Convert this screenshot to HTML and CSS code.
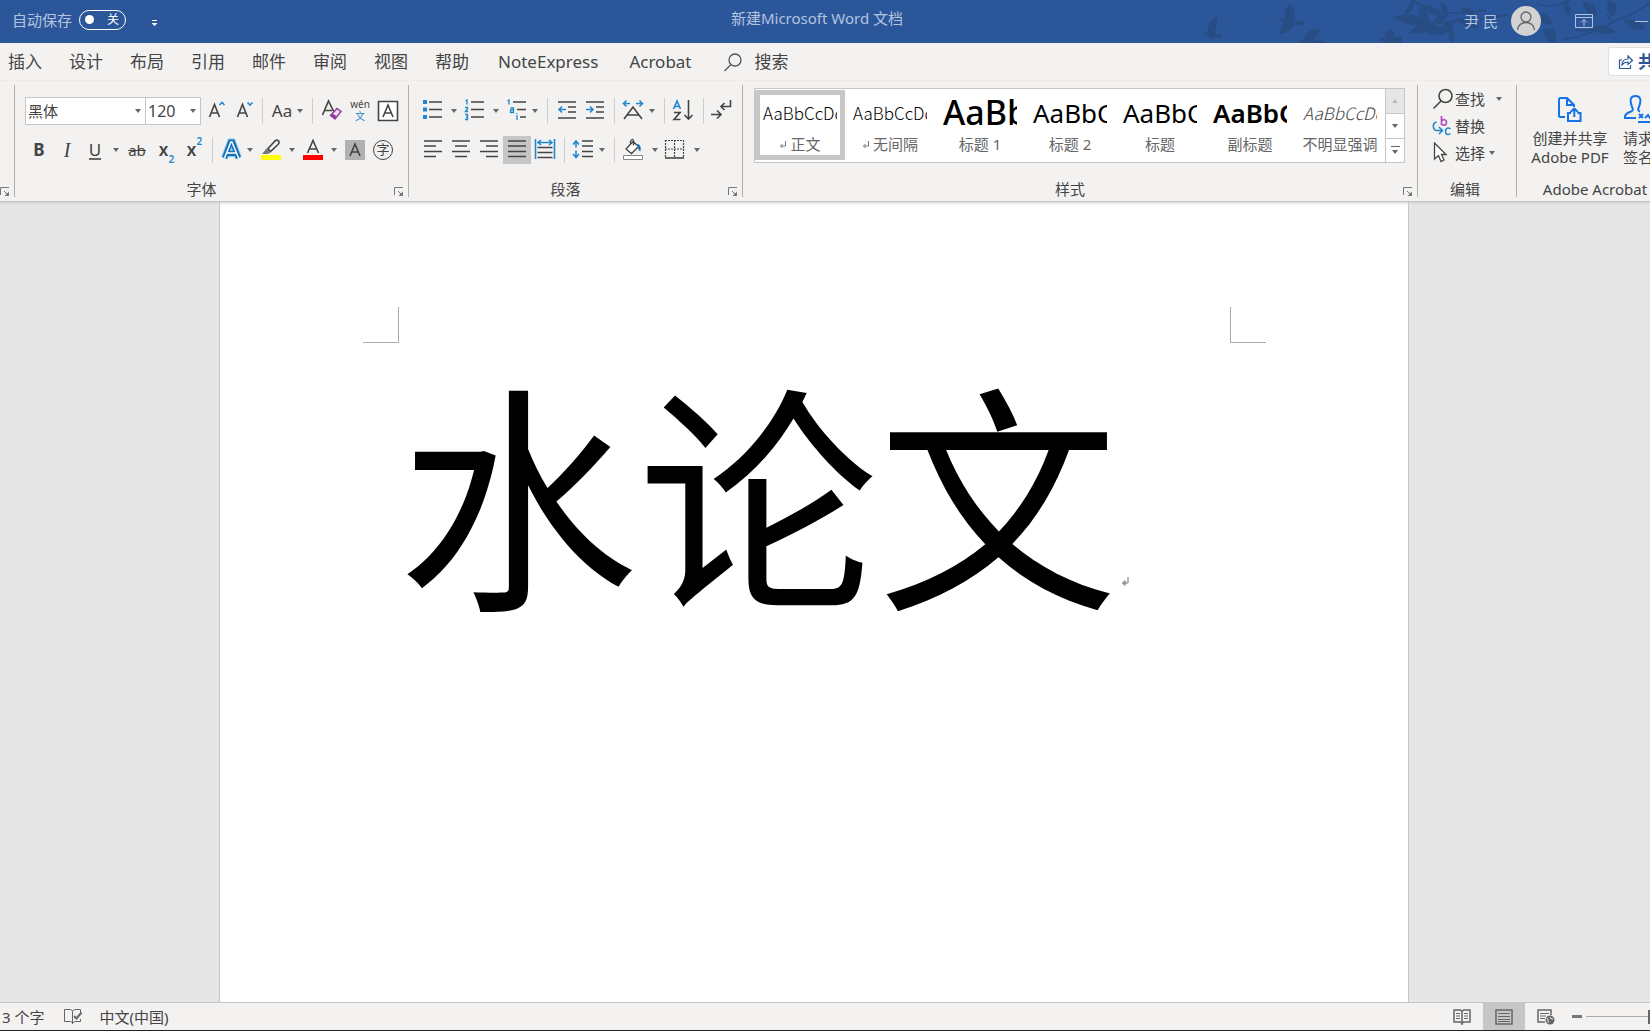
FILE: index.html
```html
<!DOCTYPE html>
<html lang="zh-CN">
<head>
<meta charset="utf-8">
<title>新建Microsoft Word 文档</title>
<link rel="stylesheet" href="styles.css">
</head>
<body>
<header class="titlebar">
  <svg class="titlebar-art" viewBox="0 0 1350 129" aria-hidden="true">
    <g transform="translate(-120 0)" fill="#284d84">
      <path d="M125 95L141 97Q146 56 172 50Q169 80 165 102L187 106L185 115L167 110L157 118L145 112L136 103Z"/>
      <path d="M357 53L373 57Q374 20 390 10Q406 22 405 62L434 64L432 77L403 74Q388 100 360 102Q361 80 370 68Z"/>
      <path d="M413 122L433 117Q438 90 465 86L480 88Q475 108 460 121L491 123V129H425Z"/>
      <path d="M655 115L674 114Q673 93 688 88Q704 93 702 110L726 112L724 129H676Z"/>
      <path d="M700 50Q760 30 808 70Q750 90 700 50ZM733 45Q738 8 763 3Q762 35 733 45ZM770 12Q828 10 848 48Q800 44 770 12ZM775 25Q808 32 806 68Q772 55 775 25ZM842 2Q872 24 862 50Q838 32 842 2ZM745 98Q780 62 828 76Q790 112 745 98ZM795 94Q838 66 878 88Q840 118 795 94ZM818 68Q834 40 862 42Q852 72 818 68ZM870 86Q895 100 876 128Q858 106 870 86ZM845 70Q870 62 884 80Q862 88 845 70ZM890 60Q930 50 960 82Q920 92 890 60ZM900 20Q935 20 950 45Q915 46 900 20Z"/>
      <path d="M1120 40Q1168 32 1180 72Q1132 80 1120 40ZM1150 90Q1192 70 1188 128Q1152 128 1150 90ZM1215 10Q1205 30 1225 48Q1245 26 1215 0ZM1268 5Q1318 10 1310 52Q1272 40 1268 5ZM1290 85Q1330 62 1368 95Q1326 112 1290 85ZM1345 0Q1385 14 1358 50Q1332 30 1345 0ZM1390 60Q1436 50 1458 88Q1410 98 1390 60Z"/>
      <path d="M755 0Q790 24 850 38Q900 42 980 30M800 72Q860 70 910 58Q980 60 1050 42M862 80L895 58M1130 10Q1180 30 1230 0M1210 118Q1300 104 1370 60Q1410 48 1470 10M1250 90Q1310 96 1340 80M1355 65L1340 42" fill="none" stroke="#284d84" stroke-width="6"/>
    </g>
  </svg>
  <div class="quick-access">
    <span class="autosave-label" id="autosave">自动保存</span>
    <button class="toggle" role="switch" aria-checked="false" aria-labelledby="autosave"><span class="toggle-knob"></span>关</button>
    <button class="qat-more" aria-label="自定义快速访问工具栏"><svg width="9" height="8" viewBox="0 0 9 8"><path d="M2 1.5H7" stroke="#fff"/><path d="M1.500 4H7.500L4.500 7Z" fill="#fff"/></svg></button>
  </div>
  <h1 class="doc-title">新建Microsoft Word 文档</h1>
  <div class="account">
    <span class="user-name">尹 民</span>
    <button class="avatar" aria-label="帐户"><svg width="30" height="30" viewBox="0 0 30 30"><circle cx="15" cy="15" r="15" fill="#d2d2d2"/><g fill="none" stroke="#666" stroke-width="1.300"><circle cx="15" cy="11" r="5"/><path d="M6.500 24C7 14 23 14 23.500 24"/></g></svg></button>
    <button class="win-button" aria-label="功能区显示选项"><svg width="18" height="14" viewBox="0 0 18 14" fill="none" stroke="#b4c4df"><path d="M.5.500H17.500V13.500H.5ZM.5 3.500H17.500M9 12V6M6 8.500L9 5.500L12 8.500"/></svg></button>
    <button class="win-button minimize" aria-label="最小化"><svg width="15" height="14" viewBox="0 0 15 14"><path d="M0 7.500H13" stroke="#b4c4df"/></svg></button>
  </div>
</header>

<nav class="tabs">
  <a href="#insert">插入</a><a href="#design">设计</a><a href="#layout">布局</a><a href="#refs">引用</a><a href="#mail">邮件</a><a href="#review">审阅</a><a href="#view">视图</a><a href="#help">帮助</a><a href="#noteexpress" class="wide">NoteExpress</a><a href="#acrobat" class="wide">Acrobat</a>
  <a href="#search" class="search"><svg width="20" height="20" viewBox="0 0 20 20" fill="none" stroke="#555" stroke-width="1.300"><circle cx="12" cy="8" r="6"/><path d="M8 12.500L1.500 19"/></svg>搜索</a>
  <button class="share"><svg width="16" height="16" viewBox="0 0 16 16" fill="none" stroke="#2b579a" stroke-width="1.200"><path d="M4 6H1.500V14.500H12.500V11M4 11C4 7 6.500 5 10 5V2L14.500 6.500L10 10.500V8C7 8 5.500 9 4 11Z"/></svg><span>共享</span></button>
</nav>

<main class="ribbon">
  <section class="group group-clipboard"><div class="group-foot"><button class="launcher" aria-label="剪贴板设置"><svg width="10" height="10" viewBox="0 0 10 10"><path d="M.5 8V.5H9M4 4L7 7" fill="none" stroke="#777"/><path d="M9 4.500V9H4.500Z" fill="#777"/></svg></button></div></section>

  <section class="group group-font">
    <div class="row">
      <div class="combo combo-font"><select aria-label="字体"><option>黑体</option></select><span class="caret"></span></div>
      <div class="combo combo-size"><select aria-label="字号"><option>120</option></select><span class="caret"></span></div>
      <button class="tool" aria-label="增大字号"><svg viewBox="0 0 28 28"><path d="M8.500 20L13.500 7.500L18.500 20M10 16H17" class="ink thick"/><path d="M18.500 8L21 5.500L23.500 8" class="blue thick"/></svg></button>
      <button class="tool" aria-label="减小字号"><svg viewBox="0 0 28 28"><path d="M8.500 20L13.500 7.500L18.500 20M10 16H17" class="ink thick"/><path d="M18.500 5.500L21 8L23.500 5.500" class="blue thick"/></svg></button>
      <span class="sep"></span>
      <button class="tool letters" aria-label="更改大小写">Aa</button><button class="drop tight" aria-label="大小写选项"><span class="caret"></span></button>
      <span class="sep"></span>
      <button class="tool" aria-label="清除格式"><svg viewBox="0 0 28 28"><path d="M4.500 18L10.500 4L16 15M6.500 13.500H14" class="ink thick"/><path d="M12.500 18.500L19 11.500L23 14.500L17 22Z" fill="#f0dff0" stroke="#953ba0" stroke-width="1.500"/><path d="M12.500 18.500L14.500 16.500L19 19.500L17 22Z" fill="#953ba0"/></svg></button>
      <button class="tool pinyin" aria-label="拼音指南"><span>wén</span><b>文</b></button>
      <button class="tool" aria-label="字符边框"><svg viewBox="0 0 28 28"><path d="M4.500 4.500H23.500V23.500H4.500Z" fill="#fff" stroke="#444" stroke-width="1.600"/><path d="M9 20L14 8L19 20M10.500 16H17.500" class="ink thick"/></svg></button>
    </div>
    <div class="row">
      <button class="tool letters bold" aria-label="加粗">B</button>
      <button class="tool letters italic" aria-label="倾斜">I</button>
      <button class="tool letters underline" aria-label="下划线"><span>U</span></button><button class="drop" aria-label="下划线选项"><span class="caret"></span></button>
      <button class="tool letters strike" aria-label="删除线">ab</button>
      <button class="tool letters script" aria-label="下标">x<sub>2</sub></button>
      <button class="tool letters script" aria-label="上标">x<sup>2</sup></button>
      <span class="sep"></span>
      <button class="tool" aria-label="文本效果"><svg viewBox="0 0 28 28"><path d="M6.500 22L12.500 6H14.500L20.500 22M9 17.500H18" fill="none" stroke="#8ec6ec" stroke-width="7"/><path d="M6.500 22L12.500 6H14.500L20.500 22M9 17.500H18" fill="none" stroke="#1570b8" stroke-width="5"/><path d="M6.500 22L12.900 6H14L20.500 22M9 17H18" fill="none" stroke="#fff" stroke-width="1.500"/></svg></button><button class="drop tight" aria-label="文本效果选项"><span class="caret"></span></button>
      <button class="tool" aria-label="突出显示"><svg viewBox="0 0 28 28"><path d="M11 12.500L18.500 4.500Q20.500 3.500 22 5.500Q22.500 7 21 8.500L13.500 15.500Z" class="ink thick"/><path d="M10 12L14 16L11 18H5Z" fill="#777"/><path d="M4 19H24V24H4Z" fill="#ff0"/></svg></button><button class="drop" aria-label="突出显示颜色"><span class="caret"></span></button>
      <button class="tool" aria-label="字体颜色"><svg viewBox="0 0 28 28"><path d="M8.500 17L14 4.500L19.500 17M10.500 13H17.500" class="ink thick"/><path d="M4 19H24V24H4Z" fill="#f00"/></svg></button><button class="drop" aria-label="字体颜色选项"><span class="caret"></span></button>
      <button class="tool" aria-label="字符底纹"><svg viewBox="0 0 28 28"><path d="M4 4H24V24H4Z" fill="#b1b1b1"/><path d="M9 20L14 8L19 20M10.500 16H17.500" class="ink thick"/></svg></button>
      <button class="tool enclosed" aria-label="带圈字符"><span>字</span></button>
    </div>
    <div class="group-foot"><h2>字体</h2><button class="launcher" aria-label="字体设置"><svg width="10" height="10" viewBox="0 0 10 10"><path d="M.5 8V.5H9M4 4L7 7" fill="none" stroke="#777"/><path d="M9 4.500V9H4.500Z" fill="#777"/></svg></button></div>
  </section>

  <section class="group group-para">
    <div class="row">
      <button class="tool" aria-label="项目符号"><svg viewBox="0 0 28 28"><path d="M4 3h4v4h-4zM4 10.500h4v4h-4zM4 18h4v4h-4z" fill="#2088cc"/><path d="M10 5H23M10 12.500H23M10 20H23" class="ink thick"/></svg></button><button class="drop" aria-label="项目符号库"><span class="caret"></span></button>
      <button class="tool" aria-label="编号"><svg viewBox="0 0 28 28"><path d="M4.500 4L6 3V7.500M4 10.500H6.500V12L4.500 14.500H7M4 17.500H6.500V22.500H4M5 20H6" class="blue thin"/><path d="M10 5H23M10 12.500H23M10 20H23" class="ink thick"/></svg></button><button class="drop" aria-label="编号库"><span class="caret"></span></button>
      <button class="tool" aria-label="多级列表"><svg viewBox="0 0 28 28"><path d="M4.500 4L6 3V7.500M7.500 11H10.500V15.500H7.500V13H10.500M14 18V23M14 16V17" class="blue thin"/><path d="M10 5H23M14 12.500H23M17 20H23" class="ink thick"/></svg></button><button class="drop tight" aria-label="多级列表库"><span class="caret"></span></button>
      <span class="sep"></span>
      <button class="tool" aria-label="减少缩进量"><svg viewBox="0 0 28 28"><path d="M5 5H23M15 10H23M15 15H23M5 21H23" class="ink thick"/><path d="M13 12.500H6M9 9.500L6 12.500L9 15.500" class="blue thick"/></svg></button>
      <button class="tool" aria-label="增加缩进量"><svg viewBox="0 0 28 28"><path d="M5 5H23M15 10H23M15 15H23M5 21H23" class="ink thick"/><path d="M5 12.500H12M9 9.500L12 12.500L9 15.500" class="blue thick"/></svg></button>
      <span class="sep"></span>
      <button class="tool" aria-label="中文版式"><svg viewBox="0 0 28 28"><path d="M4 22L13 10L22 22M7 18H19" class="ink thick"/><path d="M10 6.500H3.500M6.500 3.500L3.500 6.500L6.500 9.500M16 6.500H22.500M19.500 3.500L22.500 6.500L19.500 9.500" class="blue thick"/></svg></button><button class="drop tight" aria-label="中文版式选项"><span class="caret"></span></button>
      <span class="sep"></span>
      <button class="tool" aria-label="排序"><svg viewBox="0 0 28 28"><path d="M3.500 12L7 4L10.500 12M4.500 9.500H9.500" class="blue thick"/><path d="M4 15.500H10L4 22.500H10.500M18.500 3V22M14.500 18L18.500 22L22.500 18" class="ink thick"/></svg></button>
      <span class="sep"></span>
      <button class="tool" aria-label="显示编辑标记"><svg viewBox="0 0 28 28"><path d="M21.500 3V9.500H12.500M15.500 6L12 9.500L15.500 13M2 17.500H11.500M8 13.500L12 17.500L8 21.500" class="ink thick"/></svg></button>
    </div>
    <div class="row">
      <button class="tool" aria-label="左对齐"><svg viewBox="0 0 28 28"><path d="M5 5H23M5 10H17M5 15.500H23M5 20.500H17" class="ink thick"/></svg></button>
      <button class="tool" aria-label="居中"><svg viewBox="0 0 28 28"><path d="M5 5H23M8 10H20M5 15.500H23M8 20.500H20" class="ink thick"/></svg></button>
      <button class="tool" aria-label="右对齐"><svg viewBox="0 0 28 28"><path d="M5 5H23M11 10H23M5 15.500H23M11 20.500H23" class="ink thick"/></svg></button>
      <button class="tool pressed" aria-label="两端对齐" aria-pressed="true"><svg viewBox="0 0 28 28"><path d="M5 5H23M5 10H23M5 15.500H23M5 20.500H23" class="ink thick"/></svg></button>
      <button class="tool" aria-label="分散对齐"><svg viewBox="0 0 28 28"><path d="M6.500 11.500H21.500M6.500 16.500H21.500M6.500 21.500H21.500" class="ink thick"/><path d="M4.500 3V23M23.500 3V23M7 6.500H21M10 4L7 6.500L10 9M18 4L21 6.500L18 9" class="blue thick"/></svg></button>
      <span class="sep"></span>
      <button class="tool" aria-label="行距"><svg viewBox="0 0 28 28"><path d="M12 5H23M12 10H23M12 15.500H23M12 20.500H23" class="ink thick"/><path d="M6 11.500V5.500M3 8.500L6 5L9 8.500M6 14.500V21.500M3 18L6 21.500L9 18" class="blue thick"/></svg></button><button class="drop tight" aria-label="行距选项"><span class="caret"></span></button>
      <span class="sep"></span>
      <button class="tool" aria-label="底纹"><svg viewBox="0 0 28 28"><path d="M6 13L13 5.500L18.500 10.500L11.500 17.500ZM10.500 8.500V5.500Q12 2 13.500 4.500V9.500" fill="#fff" stroke="#444" stroke-width="1.300"/><path d="M16 8Q22 7.500 20.500 15.500Q18 14.500 18 10.500Z" fill="#1a6fb8"/><path d="M3.500 19.500H22.500V23.500H3.500Z" fill="#fff" stroke="#888"/></svg></button><button class="drop" aria-label="底纹颜色"><span class="caret"></span></button>
      <button class="tool" aria-label="边框"><svg viewBox="0 0 28 28"><path d="M3 4.500H22M3.500 4V21M21.500 4V21M12.500 4V21M3 13H22" fill="none" stroke="#444" stroke-width="1.200" stroke-dasharray="2 1"/><path d="M3 22H22" class="ink thick"/></svg></button><button class="drop" aria-label="边框选项"><span class="caret"></span></button>
    </div>
    <div class="group-foot"><h2>段落</h2><button class="launcher" aria-label="段落设置"><svg width="10" height="10" viewBox="0 0 10 10"><path d="M.5 8V.5H9M4 4L7 7" fill="none" stroke="#777"/><path d="M9 4.500V9H4.500Z" fill="#777"/></svg></button></div>
  </section>

  <section class="group group-styles">
    <div class="gallery">
      <button class="style selected"><span class="preview body">AaBbCcDd</span><span class="style-name"><svg width="8" height="9" viewBox="0 0 8 9"><path d="M6.500 1V6H1.500M3.500 4L1.500 6L3.500 8" fill="none" stroke="#777"/></svg> 正文</span></button>
      <button class="style"><span class="preview body">AaBbCcDd</span><span class="style-name"><svg width="8" height="9" viewBox="0 0 8 9"><path d="M6.500 1V6H1.500M3.500 4L1.500 6L3.500 8" fill="none" stroke="#777"/></svg> 无间隔</span></button>
      <button class="style"><span class="preview heading1">AaBb</span><span class="style-name">标题 1</span></button>
      <button class="style"><span class="preview heading2">AaBbC</span><span class="style-name">标题 2</span></button>
      <button class="style"><span class="preview heading2">AaBbC</span><span class="style-name">标题</span></button>
      <button class="style"><span class="preview subtitle">AaBbC</span><span class="style-name">副标题</span></button>
      <button class="style"><span class="preview body emphasis">AaBbCcDd</span><span class="style-name">不明显强调</span></button>
      <div class="gallery-scroll">
        <button class="disabled" disabled aria-label="上一行"><span class="caret up"></span></button>
        <button aria-label="下一行"><span class="caret"></span></button>
        <button class="more" aria-label="其他样式"><span class="caret"></span></button>
      </div>
    </div>
    <div class="group-foot"><h2>样式</h2><button class="launcher" aria-label="样式窗格"><svg width="10" height="10" viewBox="0 0 10 10"><path d="M.5 8V.5H9M4 4L7 7" fill="none" stroke="#777"/><path d="M9 4.500V9H4.500Z" fill="#777"/></svg></button></div>
  </section>

  <section class="group group-edit">
    <div class="edit-list">
      <button class="edit"><svg width="22" height="22" viewBox="0 0 22 22" class="ink thick"><circle cx="13.500" cy="8" r="6.500"/><path d="M9 13L1.500 20.500"/></svg>查找<span class="caret far"></span></button>
      <button class="edit"><svg width="22" height="22" viewBox="0 0 22 22"><path d="M9.500 1V10M9.500 6.500C11 3.500 14.500 4.500 14.500 7.500S11 11 9.500 9" fill="none" stroke="#b04fc0" stroke-width="1.700"/><path d="M4.500 7C0 8 .5 16 5 15.500H10M7 12L10.500 15.500L7 19M18.500 14C15.500 11.500 13.500 14 13.500 16.500S16 20.500 18.500 18.500" class="blue thick"/></svg>替换</button>
      <button class="edit"><svg width="22" height="22" viewBox="0 0 22 22"><path d="M2.500 1V17L6.500 13.500L9 19.500L12 18L9.500 12.500H14Z" fill="#fff" stroke="#444" stroke-width="1.300"/></svg>选择<span class="caret near"></span></button>
    </div>
    <div class="group-foot"><h2>编辑</h2></div>
  </section>

  <section class="group group-acrobat">
    <div class="acrobat-tools">
      <button class="big create"><svg width="26" height="28" viewBox="0 0 26 28" fill="none" stroke="#1473e6" stroke-width="2"><path d="M8 22H3.500Q2 22 2 20.500V4.500Q2 3 3.500 3H10L17 10V12M10 3V10H17M14 18H11V26H23.500V18H20.500M17.300 22V14M13.500 17L17.300 13.500L21 17"/></svg><span>创建并共享<br>Adobe PDF</span></button>
      <button class="big sign"><svg width="30" height="28" viewBox="0 0 30 28" fill="none" stroke="#1473e6" stroke-width="2"><path d="M13 23H2Q1 19 8 16.500Q11 15.500 9 12Q5 1 12.500 1T16 12Q14 15.500 17 16.500M15 27H30M16 19L20 23M20 19L16 23M22 23L25 20L27 23L30 20" /></svg><span>请求<br>签名</span></button>
    </div>
    <div class="group-foot"><h2>Adobe Acrobat</h2></div>
  </section>
</main>

<div class="workspace">
  <article class="page">
    <div class="margins"><span class="corner corner-left"></span><span class="corner corner-right"></span></div>
    <p class="body-text">水论文<svg class="pilcrow" width="8" height="10" viewBox="0 0 8 10"><path d="M7 0V6H1.500M4 3.500L1.500 6L4 8.500Z" fill="none" stroke="#777"/></svg></p>
  </article>
</div>

<footer class="statusbar">
  <span class="count">3 个字</span>
  <button class="proof" aria-label="校对"><svg width="20" height="17" viewBox="0 0 20 17" fill="none" stroke="#666"><path d="M9.500 14.500L7.500 13.500H1.500V1.500H7.500L9.500 3V16M9.500 3L12 1.500H17.500V5M17.500 11V13.500H12L9.500 15"/><path d="M11 8L13.500 10.500L18.500 4.500" stroke-width="2"/></svg></button>
  <span class="language">中文(中国)</span>
  <div class="views">
    <button aria-label="阅读视图"><svg width="18" height="16" viewBox="0 0 18 16" fill="none" stroke="#666"><path d="M9 2.500L7.500 1H1V13H7.500L9 14.500L10.500 13H17V1H10.500ZM9 2V16" stroke-width="1.500"/><path d="M3 4.500H7M3 7H7M3 9.500H7M11 4.500H15M11 7H15M11 9.500H15"/></svg></button>
    <button class="active" aria-label="页面视图" aria-pressed="true"><svg width="18" height="16" viewBox="0 0 18 16" fill="none" stroke="#666"><path d="M1 1H17V15H1Z" stroke-width="1.500"/><path d="M3 4.500H15M3 7.500H15M3 10.500H15M3 12.500H15"/></svg></button>
    <button aria-label="Web 版式视图"><svg width="18" height="16" viewBox="0 0 18 16" fill="none" stroke="#666"><path d="M8 13H1V1H14V6" stroke-width="1.500"/><path d="M3 4.500H12M3 7H9M3 9.500H8"/><circle cx="13" cy="11" r="4.500" fill="#666" stroke="none"/><path d="M10 9Q12 12 11 14M13 8Q13 10 16 10" stroke="#f3f2f1"/></svg></button>
  </div>
  <label class="zoom"><span class="zoom-minus"></span><input type="range" aria-label="缩放" min="0" max="100" value="100"></label>
</footer>
</body>
</html>
```
FILE: styles.css
```css
* { box-sizing: border-box; }

body {
  margin: 0;
  height: 100vh;
  display: flex;
  flex-direction: column;
  overflow: hidden;
  font: 15px/20px "Noto Sans", "Noto Sans CJK SC", sans-serif;
  color: #444;
  background: #e6e6e6;
}

button {
  display: flex;
  align-items: center;
  justify-content: center;
  margin: 0;
  padding: 0;
  border: 0;
  background: none;
  color: inherit;
  font: inherit;
}

h1, h2, p { margin: 0; font-weight: 400; }
a { color: inherit; text-decoration: none; }
svg { display: block; flex: none; }

.ink { fill: none; stroke: #444; stroke-width: 1.3; }
.blue { fill: none; stroke: #2088cc; }
.thin { stroke-width: 1.3; }
.thick { stroke-width: 1.6; }

.caret {
  border: 3px solid transparent;
  border-top: 4px solid #666;
  border-bottom: 0;
}
.caret.up {
  border-top: 0;
  border-bottom: 4px solid #bbb;
}

/* Title bar */
.titlebar {
  position: relative;
  flex: none;
  display: grid;
  grid-template-columns: 1fr auto 1fr;
  align-items: center;
  height: 43px;
  background: #2b579a;
  color: #b4c4df;
}
.titlebar-art {
  position: absolute;
  top: 0;
  right: 0;
  height: 43px;
}
.quick-access, .account { display: flex; align-items: center; position: relative; }
.quick-access { padding: 0 0 4px 12px; }
.toggle {
  width: 47px;
  height: 20px;
  margin-left: 7px;
  padding: 0 6px 0 5px;
  justify-content: space-between;
  border: 1px solid #fff;
  border-radius: 10px;
  color: #fff;
  font-size: 12px;
}
.toggle-knob { width: 9px; height: 9px; border-radius: 50%; background: #fff; }
.qat-more { margin: 6px 0 0 24px; }
.doc-title { margin-left: -16px; padding-bottom: 8px; font-size: 15px; }
.account { justify-content: flex-end; padding-bottom: 2px; }
.user-name { margin-right: 13px; }
.win-button { margin-left: 34px; }
.minimize { margin-left: 42px; }

/* Tabs */
.tabs {
  flex: none;
  display: flex;
  align-items: center;
  height: 38px;
  padding: 0 0 1px 8px;
  background: #f3f2f1;
  font-size: 17px;
}
.tabs a { margin-right: 27px; }
.tabs .wide { margin: 0 29px 0 2px; }
.tabs .search { display: flex; align-items: center; gap: 12px; margin: 0 auto 0 2px; }
.share {
  height: 29px;
  width: 42px;
  gap: 4px;
  padding-left: 9px;
  justify-content: flex-start;
  overflow: hidden;
  border: 1px solid #e1dfdd;
  border-right: 0;
  border-radius: 3px 0 0 3px;
  background: #fff;
  color: #2b579a;
  font-weight: 700;
  white-space: nowrap;
}

/* Ribbon */
.ribbon {
  flex: none;
  display: flex;
  height: 121px;
  padding: 4px 0;
  border-bottom: 1px solid #c8c6c4;
  background: #f3f2f1;
  box-shadow: 0 1px 3px #ccc;
  position: relative;
}
.group {
  flex: none;
  display: flex;
  flex-direction: column;
  border-right: 1px solid #b3b0ad;
}
.group-clipboard { width: 15px; }
.group-font { width: 394px; padding: 12px 0 0 10px; }
.group-para { width: 334px; padding: 12px 0 0 10px; }
.group-styles { flex: 1; min-width: 0; padding-top: 3px; }
.group-edit { width: 99px; }
.group-acrobat { width: 133px; overflow: hidden; border: 0; }

.group-foot {
  display: flex;
  align-items: center;
  height: 17px;
  margin-top: auto;
  padding-right: 4px;
}
.group-font .group-foot, .group-para .group-foot { margin-left: -10px; }
.group-foot h2 { flex: 1; text-align: center; font-size: 15px; line-height: 18px; }
.launcher { margin-top: 6px; padding-left: 6px; }
.group-clipboard .launcher { padding: 0; }

.row { display: flex; height: 28px; margin-bottom: 11px; }
.tool { width: 28px; height: 28px; }
.tool svg { width: 28px; height: 28px; }
.tool.pressed { background: #c6c6c6; }
.drop { width: 14px; height: 28px; }
.drop.tight { margin-left: -3px; }
.sep { width: 1px; height: 26px; margin: 1px 5px; background: #d0cecc; }

.combo { display: grid; align-items: center; height: 28px; border: 1px solid #c6c6c6; background: #fff; }
.combo select {
  grid-area: 1 / 1;
  appearance: none;
  width: 100%;
  height: 26px;
  padding: 0 2px;
  border: 0;
  background: none;
  color: #444;
  font: inherit;
}
.combo .caret { grid-area: 1 / 1; justify-self: end; margin-right: 4px; pointer-events: none; }
.combo-font { width: 121px; }
.combo-size { width: 56px; margin-left: -1px; }
.combo-size select { font-size: 16px; }

.letters { font-size: 17px; }
.bold { font-weight: 700; }
.italic { font-family: "Liberation Serif", serif; font-style: italic; font-size: 20px; }
.underline span { line-height: 17px; border-bottom: 2px solid #666; }
.strike { font-size: 15px; text-decoration: line-through; }
.script { font-weight: 600; padding-left: 3px; }
.script sub, .script sup { color: #2088cc; font-size: 10px; line-height: 10px; }
.script sub { align-self: flex-end; }
.script sup { align-self: flex-start; }
.pinyin { flex-direction: column; font-size: 10px; line-height: 10px; }
.pinyin b { color: #2088cc; font-weight: 400; line-height: 14px; }
.enclosed span {
  width: 20px;
  height: 20px;
  border: 1px solid #444;
  border-radius: 50%;
  font-size: 13px;
  line-height: 17px;
}

/* Style gallery */
.gallery {
  display: flex;
  height: 75px;
  margin: 0 12px 0 11px;
  border: 1px solid #c6c6c6;
  background: #fff;
}
.style {
  flex: 0 0 90px;
  flex-direction: column;
  height: 70px;
  margin-top: 1px;
  border: 5px solid transparent;
}
.style.selected { border-color: #c6c6c6; }
.preview {
  width: 74px;
  height: 38px;
  overflow: hidden;
  color: #000;
  line-height: 34px;
  text-align: left;
  white-space: nowrap;
}
.style-name {
  display: flex;
  align-items: center;
  gap: 3px;
  color: #666;
  white-space: nowrap;
}
.preview.body { font-family: "Noto Sans CJK SC", sans-serif; font-size: 17px; font-weight: 300; }
.preview.heading1 { font-size: 34px; line-height: 32px; font-weight: 500; }
.preview.heading2 { font-size: 26px; font-weight: 400; }
.preview.subtitle { font-size: 26px; font-weight: 600; }
.preview.emphasis { color: #444; font-style: italic; }
.gallery-scroll { width: 19px; margin-left: auto; display: grid; grid-template-rows: 1fr 1fr 1fr; border-left: 1px solid #c6c6c6; }
.gallery-scroll button + button { border-top: 1px solid #c6c6c6; }
.gallery-scroll .disabled { background: #e6e6e6; }
.gallery-scroll .more { flex-direction: column; gap: 3px; }
.more::before { content: ""; width: 9px; height: 1px; background: #666; }

/* Editing and Acrobat */
.edit-list { display: grid; padding-left: 14px; }
.edit { height: 27px; justify-content: flex-start; gap: 1px; }
.caret.far { margin-left: 10px; }
.caret.near { margin-left: 3px; }
.acrobat-tools { display: flex; gap: 11px; padding: 10px 0 0 11px; }
.big { flex: none; flex-direction: column; gap: 6px; line-height: 19px; }
.big.create { width: 84px; }
.group-acrobat .group-foot { width: 156px; padding: 0; }

/* Document */
.workspace {
  flex: 1;
  min-height: 0;
  display: flex;
  padding: 0 241px 0 219px;
  background: #e6e6e6;
}
.page {
  flex: 1;
  padding: 105px 142px 0 143px;
  border: 1px solid #c6c6c6;
  border-width: 0 1px;
  background: #fff;
}
.margins { display: flex; justify-content: space-between; }
.corner { width: 36px; height: 36px; border-bottom: 1px solid #aaa; }
.corner-left { border-right: 1px solid #aaa; }
.corner-right { border-left: 1px solid #aaa; }
.body-text {
  display: flex;
  padding-left: 35px;
  color: #000;
  font: 240px/290px "Noto Sans CJK SC", sans-serif;
  white-space: nowrap;
}
.pilcrow { margin: 234px 0 0 3px; }

/* Status bar */
.statusbar {
  flex: none;
  display: flex;
  align-items: center;
  height: 29px;
  padding-left: 2px;
  border-top: 1px solid #c6c6c6;
  border-bottom: 1px solid #222;
  background: #f3f2f1;
}
.proof { margin: 0 16px 0 19px; }
.views { display: flex; height: 100%; margin-left: auto; }
.views button { width: 42px; }
.views .active { background: #c6c6c6; }
.zoom { display: flex; align-items: center; gap: 4px; margin-left: 5px; }
.zoom-minus { width: 10px; height: 3px; background: #777; }
.zoom input { appearance: none; width: 64px; height: 16px; margin: 0; background: linear-gradient(#aaa, #aaa) center / 100% 1px no-repeat; }
.zoom input::-webkit-slider-thumb { appearance: none; width: 2px; height: 14px; background: #666; }
```
